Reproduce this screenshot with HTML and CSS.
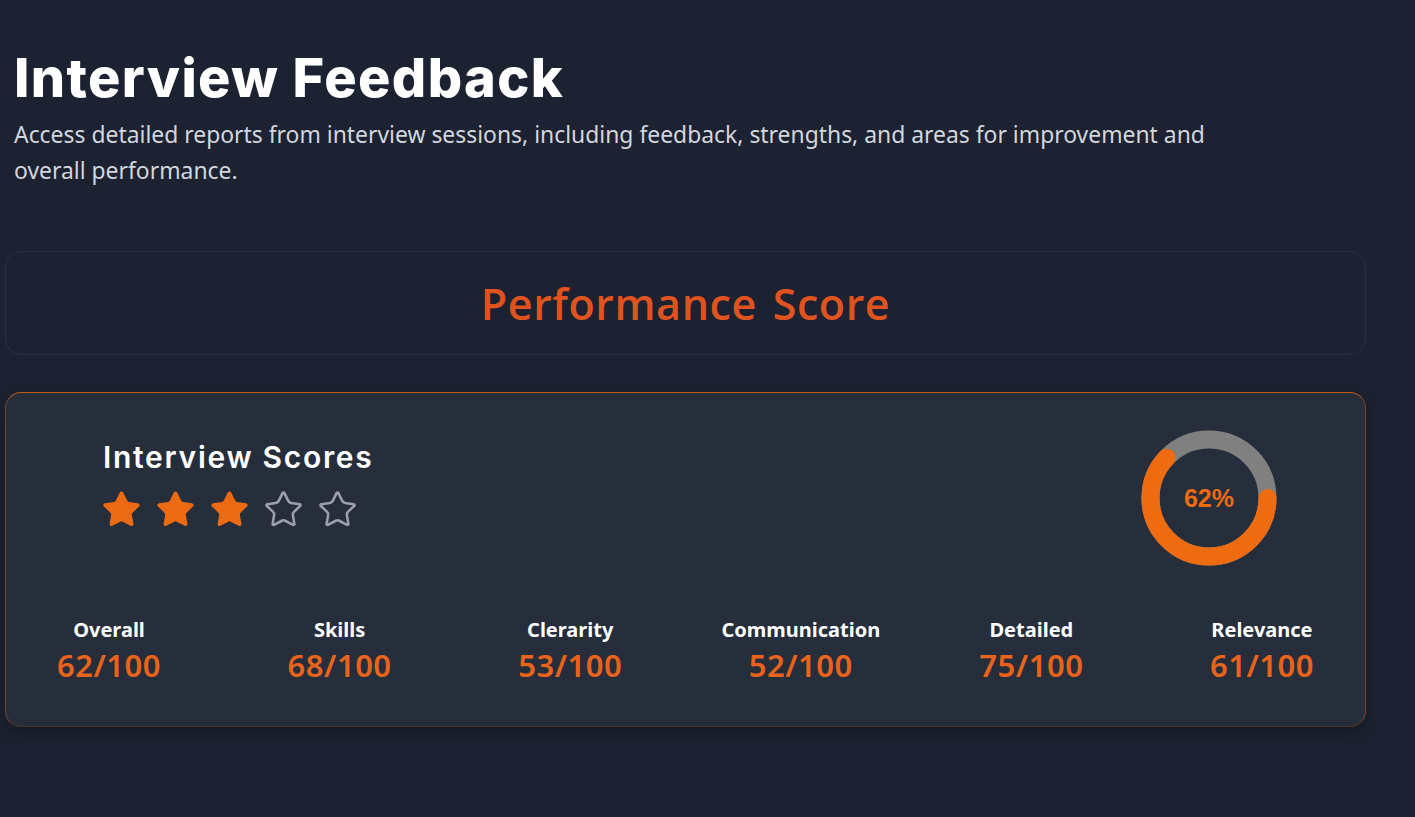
FILE: index.html
```html
<!DOCTYPE html>
<html lang="en">
<head>
<meta charset="utf-8">
<title>Interview Feedback</title>
<link rel="stylesheet" href="styles.css">
</head>
<body>
<main class="page">
  <header class="page-header">
    <h1 class="page-title">Interview Feedback</h1>
    <p class="page-subtitle">Access detailed reports from interview sessions, including feedback, strengths, and areas for improvement and overall performance.</p>
  </header>

  <section class="perf-box">
    <h2 class="perf-title">Performance Score</h2>
  </section>

  <section class="score-card">
    <div class="score-head">
      <div class="score-head-left">
        <h3 class="score-title">Interview Scores</h3>
        <div class="stars">
          <svg class="star star-on" viewBox="0 0 24 24"><path d="M11.525 2.295a.53.53 0 0 1 .95 0l2.31 4.679a2.123 2.123 0 0 0 1.595 1.16l5.166.756a.53.53 0 0 1 .294.904l-3.736 3.638a2.123 2.123 0 0 0-.611 1.878l.882 5.14a.53.53 0 0 1-.771.56l-4.618-2.428a2.122 2.122 0 0 0-1.973 0L6.396 21.01a.53.53 0 0 1-.77-.56l.881-5.139a2.122 2.122 0 0 0-.611-1.879L2.16 9.795a.53.53 0 0 1 .294-.906l5.165-.755a2.122 2.122 0 0 0 1.597-1.16z"/></svg>
          <svg class="star star-on" viewBox="0 0 24 24"><path d="M11.525 2.295a.53.53 0 0 1 .95 0l2.31 4.679a2.123 2.123 0 0 0 1.595 1.16l5.166.756a.53.53 0 0 1 .294.904l-3.736 3.638a2.123 2.123 0 0 0-.611 1.878l.882 5.14a.53.53 0 0 1-.771.56l-4.618-2.428a2.122 2.122 0 0 0-1.973 0L6.396 21.01a.53.53 0 0 1-.77-.56l.881-5.139a2.122 2.122 0 0 0-.611-1.879L2.16 9.795a.53.53 0 0 1 .294-.906l5.165-.755a2.122 2.122 0 0 0 1.597-1.16z"/></svg>
          <svg class="star star-on" viewBox="0 0 24 24"><path d="M11.525 2.295a.53.53 0 0 1 .95 0l2.31 4.679a2.123 2.123 0 0 0 1.595 1.16l5.166.756a.53.53 0 0 1 .294.904l-3.736 3.638a2.123 2.123 0 0 0-.611 1.878l.882 5.14a.53.53 0 0 1-.771.56l-4.618-2.428a2.122 2.122 0 0 0-1.973 0L6.396 21.01a.53.53 0 0 1-.77-.56l.881-5.139a2.122 2.122 0 0 0-.611-1.879L2.16 9.795a.53.53 0 0 1 .294-.906l5.165-.755a2.122 2.122 0 0 0 1.597-1.16z"/></svg>
          <svg class="star star-off" viewBox="0 0 24 24"><path d="M11.525 2.295a.53.53 0 0 1 .95 0l2.31 4.679a2.123 2.123 0 0 0 1.595 1.16l5.166.756a.53.53 0 0 1 .294.904l-3.736 3.638a2.123 2.123 0 0 0-.611 1.878l.882 5.14a.53.53 0 0 1-.771.56l-4.618-2.428a2.122 2.122 0 0 0-1.973 0L6.396 21.01a.53.53 0 0 1-.77-.56l.881-5.139a2.122 2.122 0 0 0-.611-1.879L2.16 9.795a.53.53 0 0 1 .294-.906l5.165-.755a2.122 2.122 0 0 0 1.597-1.16z"/></svg>
          <svg class="star star-off" viewBox="0 0 24 24"><path d="M11.525 2.295a.53.53 0 0 1 .95 0l2.31 4.679a2.123 2.123 0 0 0 1.595 1.16l5.166.756a.53.53 0 0 1 .294.904l-3.736 3.638a2.123 2.123 0 0 0-.611 1.878l.882 5.14a.53.53 0 0 1-.771.56l-4.618-2.428a2.122 2.122 0 0 0-1.973 0L6.396 21.01a.53.53 0 0 1-.77-.56l.881-5.139a2.122 2.122 0 0 0-.611-1.879L2.16 9.795a.53.53 0 0 1 .294-.906l5.165-.755a2.122 2.122 0 0 0 1.597-1.16z"/></svg>
        </div>
      </div>
      <div class="donut">
        <svg class="donut-svg" viewBox="0 0 136 136">
          <circle class="donut-track" cx="68" cy="68" r="58.5"/>
          <circle class="donut-bar" cx="68" cy="68" r="58.5" stroke-dasharray="227.9 367.6"/>
        </svg>
        <span class="donut-label">62%</span>
      </div>
    </div>

    <div class="metrics">
      <div class="metric"><span class="metric-label">Overall</span><span class="metric-value">62/100</span></div>
      <div class="metric"><span class="metric-label">Skills</span><span class="metric-value">68/100</span></div>
      <div class="metric"><span class="metric-label">Clerarity</span><span class="metric-value">53/100</span></div>
      <div class="metric"><span class="metric-label">Communication</span><span class="metric-value">52/100</span></div>
      <div class="metric"><span class="metric-label">Detailed</span><span class="metric-value">75/100</span></div>
      <div class="metric"><span class="metric-label">Relevance</span><span class="metric-value">61/100</span></div>
    </div>
  </section>
</main>
</body>
</html>
```

FILE: styles.css
```css
* { box-sizing: border-box; }

html, body {
  margin: 0;
  background: #1c2231;
}

body {
  font-family: "Noto Sans", "Liberation Sans", sans-serif;
  color: #ffffff;
}

.page {
  width: 1361px;
  margin-left: 5px;
  padding-top: 47px;
  padding-bottom: 80px;
}

.page-header {
  padding-left: 9px;
}

.page-title {
  margin: 0;
  font-family: "Inter", "Liberation Sans", sans-serif;
  font-weight: 800;
  font-size: 54px;
  line-height: 62px;
  letter-spacing: 1.4px;
  color: #ffffff;
}

.page-subtitle {
  margin: 8px 0 0;
  max-width: 1215px;
  font-family: "Noto Sans", "Liberation Sans", sans-serif;
  font-size: 22.9px;
  line-height: 36px;
  color: #d3d6dd;
}

.perf-box {
  margin-top: 62px;
  height: 104px;
  border: 1px solid #263042;
  border-radius: 16px;
  display: flex;
  align-items: center;
  justify-content: center;
}

.perf-title {
  margin: 0;
  font-family: "Open Sans", "Liberation Sans", sans-serif;
  font-weight: 600;
  font-size: 43px;
  letter-spacing: 0.6px;
  word-spacing: 4px;
  color: #e0521e;
}

.score-card {
  margin-top: 37px;
  background: #262d3b;
  border: 1px solid #7a4424;
  border-top-color: #c4591c;
  border-bottom-color: #4d3427;
  border-radius: 16px;
  padding: 38px 48px 41px 48px;
  box-shadow: 0 6px 14px rgba(0, 0, 0, 0.25);
}

.score-head {
  display: flex;
  justify-content: space-between;
  align-items: flex-start;
  padding-left: 49px;
  padding-right: 40px;
}

.score-title {
  margin: 8px 0 0;
  font-family: "Inter", "Liberation Sans", sans-serif;
  font-weight: 600;
  font-size: 30px;
  line-height: 36px;
  letter-spacing: 1.7px;
  color: #ffffff;
}

.stars {
  display: flex;
  gap: 13px;
  margin-top: 14px;
  margin-left: -2px;
}

.star {
  width: 41px;
  height: 41px;
  display: block;
}

.star-on {
  fill: #ec6a12;
  stroke: #ec6a12;
  stroke-width: 1.2;
  stroke-linejoin: round;
}

.star-off {
  fill: none;
  stroke: #9a9fab;
  stroke-width: 1.5;
  stroke-linejoin: round;
}

.donut {
  position: relative;
  width: 136px;
  height: 136px;
  margin-top: -1px;
  display: flex;
  align-items: center;
  justify-content: center;
}

.donut-svg {
  position: absolute;
  inset: 0;
  width: 136px;
  height: 136px;
}

.donut-track {
  fill: none;
  stroke: #808080;
  stroke-width: 18;
}

.donut-bar {
  fill: none;
  stroke: #ef6b10;
  stroke-width: 18;
  stroke-linecap: round;
}

.donut-label {
  position: relative;
  font-family: "Liberation Sans", Arial, sans-serif;
  font-weight: 700;
  font-size: 25px;
  color: #ef6b10;
}

.metrics {
  margin-top: 51px;
  display: flex;
  justify-content: space-between;
}

.metric {
  width: 110px;
  display: flex;
  flex-direction: column;
  align-items: center;
}

.metric-label {
  font-family: "Noto Sans", "Liberation Sans", sans-serif;
  font-weight: 700;
  font-size: 20px;
  line-height: 26px;
  white-space: nowrap;
  color: #ffffff;
}

.metric-value {
  margin-top: 2px;
  font-family: "Noto Sans", "Liberation Sans", sans-serif;
  font-weight: 600;
  font-size: 31px;
  line-height: 40px;
  letter-spacing: 0.5px;
  white-space: nowrap;
  color: #ea631a;
}
```
